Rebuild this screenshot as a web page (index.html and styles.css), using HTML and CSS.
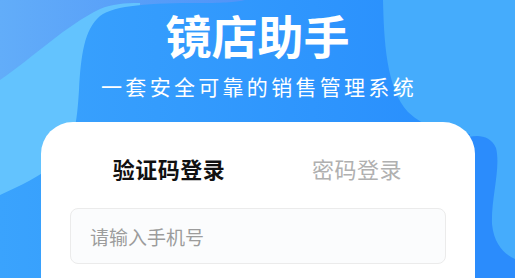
FILE: index.html
```html
<!DOCTYPE html>
<html lang="zh-CN">
<head>
<meta charset="utf-8">
<title>镜店助手</title>
<link rel="stylesheet" href="styles.css">
</head>
<body>
<div class="page">
  <svg class="backdrop" width="515" height="278" viewBox="0 0 515 278" aria-hidden="true">
    <defs>
      <linearGradient id="mid" x1="0" y1="0" x2="1" y2="0">
        <stop offset="0" stop-color="#3aa3fd"/>
        <stop offset="1" stop-color="#288efd"/>
      </linearGradient>
      <linearGradient id="lav" x1="0" y1="0" x2="1" y2="0">
        <stop offset="0" stop-color="#62adf9"/>
        <stop offset="1" stop-color="#4f92f8"/>
      </linearGradient>
    </defs>
    <rect width="515" height="278" fill="#45acfc"/>
    <path d="M0,0 H260 V150 H0 Z" fill="url(#lav)"/>
    <path d="M0,80 C35,56 65,26 100,9 C112,4 124,3 140,3 L140,278 L0,278 Z" fill="#63c3fe"/>
    <path d="M245,0 H383 C384,40 386,88 408,112 C425,128 445,132 470,134 L470,278 H0 V195 C20,186 40,176 55,164 C75,148 77,120 79,90 C81,55 84,30 100,16 C115,5 150,3 200,3 C225,3 238,2 245,0 Z" fill="url(#mid)"/>
    <path d="M462,140 C472,134 490,133 496,148 C501,168 491,198 492,224 C494,244 504,254 515,259 V278 H462 Z" fill="#2b8cfc"/>
  </svg>

  <header class="hero">
    <h1 class="title">镜店助手</h1>
    <p class="subtitle">一套安全可靠的销售管理系统</p>
  </header>

  <main class="card">
    <div class="tabs">
      <span class="tab tab-active">验证码登录</span>
      <span class="tab">密码登录</span>
    </div>
    <div class="field">
      <input class="input" type="tel" placeholder="请输入手机号">
    </div>
  </main>
</div>
</body>
</html>
```

FILE: styles.css
```css
* {
  box-sizing: border-box;
}

html, body {
  margin: 0;
  padding: 0;
}

body {
  font-family: "Noto Sans CJK SC", "Noto Sans", sans-serif;
  overflow: hidden;
}

.page {
  position: relative;
  width: 515px;
  height: 278px;
  overflow: hidden;
  display: flex;
  flex-direction: column;
  background: #3399fc;
}

.backdrop {
  position: absolute;
  left: 0;
  top: 0;
  z-index: 0;
  display: block;
}

.hero {
  position: relative;
  z-index: 1;
  padding-top: 7px;
  display: flex;
  flex-direction: column;
  align-items: center;
  color: #fff;
}

.title {
  margin: 0;
  font-size: 46px;
  line-height: 55px;
  font-weight: 700;
  letter-spacing: 0;
}

.subtitle {
  margin: 10px 0 0;
  font-size: 21px;
  line-height: 28px;
  font-weight: 400;
  letter-spacing: 3.3px;
  padding-left: 3px;
}

.card {
  position: relative;
  z-index: 1;
  margin: 22px 0 0 41px;
  width: 434px;
  flex: 1;
  background: #fff;
  border-radius: 32px 32px 0 0;
  padding: 31px 29px 0;
}

.tabs {
  display: flex;
  margin: 0 -5px 0 5px;
}

.tab {
  flex: 1;
  text-align: center;
  font-size: 22px;
  line-height: 30px;
  color: #b0b0b0;
  letter-spacing: 0.5px;
}

.tab-active {
  color: #111;
  font-weight: 700;
}

.field {
  margin-top: 25px;
}

.input {
  display: block;
  width: 100%;
  height: 56px;
  border: 1px solid #ebebeb;
  border-radius: 8px;
  background: #fbfcfd;
  padding: 0 0 0 19px;
  font-family: "Noto Sans CJK SC", "Noto Sans", sans-serif;
  font-size: 19px;
  color: #333;
  outline: none;
}

.input::placeholder {
  color: #9c9c9c;
}
```
